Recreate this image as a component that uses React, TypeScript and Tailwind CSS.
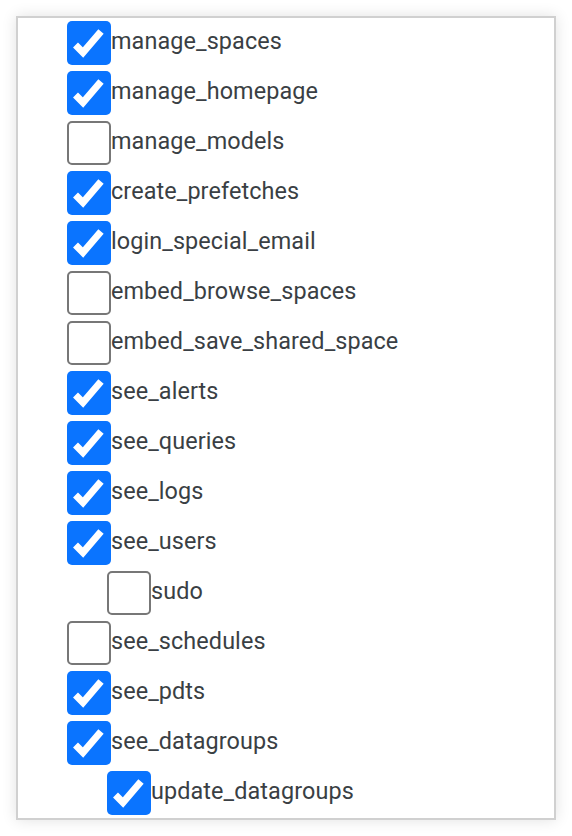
const items: { name: string; checked: boolean; nested?: boolean }[] = [
  { name: "manage_spaces", checked: true },
  { name: "manage_homepage", checked: true },
  { name: "manage_models", checked: false },
  { name: "create_prefetches", checked: true },
  { name: "login_special_email", checked: true },
  { name: "embed_browse_spaces", checked: false },
  { name: "embed_save_shared_space", checked: false },
  { name: "see_alerts", checked: true },
  { name: "see_queries", checked: true },
  { name: "see_logs", checked: true },
  { name: "see_users", checked: true },
  { name: "sudo", checked: false, nested: true },
  { name: "see_schedules", checked: false },
  { name: "see_pdts", checked: true },
  { name: "see_datagroups", checked: true },
  { name: "update_datagroups", checked: true, nested: true },
];

function Box({ checked }: { checked: boolean }) {
  if (checked) {
    return (
      <div className="w-[44px] h-[44px] shrink-0 rounded-[5px] bg-[#0a74ff]">
        <svg width="44" height="44" viewBox="0 0 44 44">
          <path
            d="M8.5 24 L16 31.5 L34 10.5"
            fill="none"
            stroke="white"
            strokeWidth="7"
            strokeLinecap="butt"
            strokeLinejoin="miter"
          />
        </svg>
      </div>
    );
  }
  return (
    <div className="w-[44px] h-[44px] shrink-0 rounded-[5px] border-2 border-[#777] bg-white" />
  );
}

export default function App() {
  return (
    <div className="w-[572px] h-[836px] bg-white p-4">
      <div className="w-[540px] border-2 border-[#d0d0d0] bg-white shadow-[0_0_14px_rgba(0,0,0,0.12)]">
        {items.map((item) => (
          <div
            key={item.name}
            className={`flex items-center h-[50px] ${item.nested ? "pl-[89px]" : "pl-[49px]"}`}
          >
            <Box checked={item.checked} />
            <span className="font-['Roboto',sans-serif] text-[23.4px] text-[#3a3f44] leading-none tracking-[0.1px] mb-[2px]">
              {item.name}
            </span>
          </div>
        ))}
      </div>
    </div>
  );
}
